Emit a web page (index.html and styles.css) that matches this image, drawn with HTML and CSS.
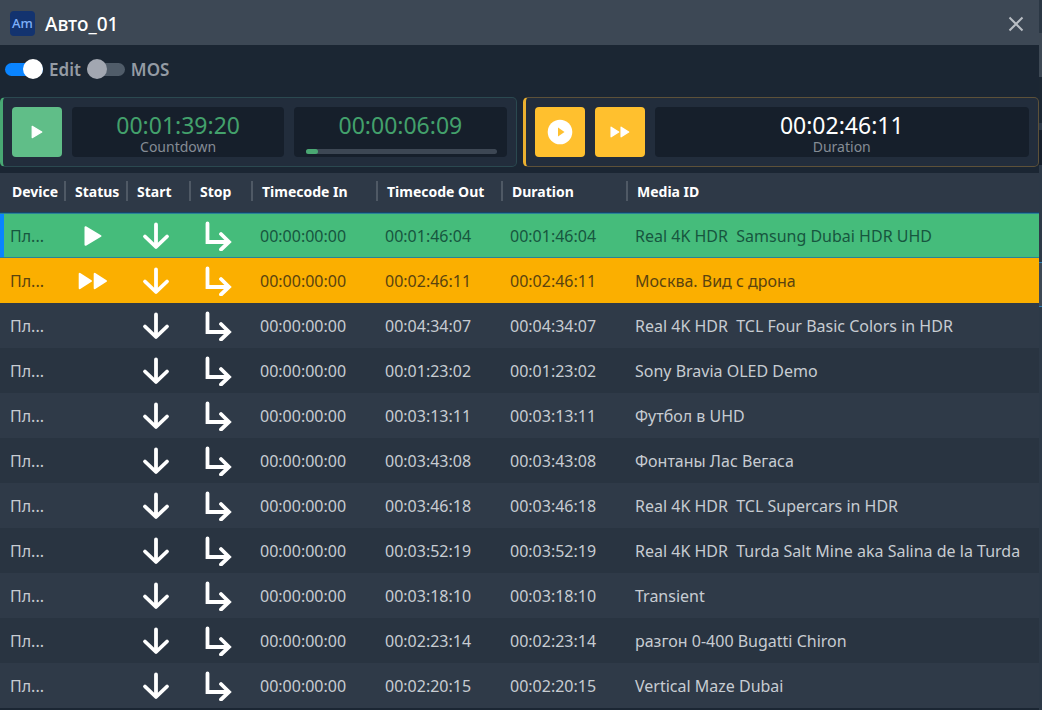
FILE: index.html
```html
<!DOCTYPE html>
<html lang="ru">
<head>
<meta charset="utf-8">
<title>Авто_01</title>
<link rel="stylesheet" href="styles.css">
</head>
<body>
<svg class="defs" aria-hidden="true">
  <symbol id="play" viewBox="0 0 18 22"><path d="M1.5 2.2v17.6L16.5 11z" fill="currentColor" stroke="currentColor" stroke-width="2" stroke-linejoin="round"/></symbol>
  <symbol id="forward" viewBox="0 0 30 18"><path d="M1.7 1.8v14.4L13 9zM16.7 1.8v14.4L28 9z" fill="currentColor" stroke="currentColor" stroke-width="2" stroke-linejoin="round"/></symbol>
  <symbol id="down" viewBox="0 0 28 28"><path d="M14 2.5v22M3 14.5l11 10.500 11-10.500" fill="none" stroke="currentColor" stroke-width="3.8" stroke-linecap="round" stroke-linejoin="round"/></symbol>
  <symbol id="turn" viewBox="0 0 28 30"><path d="M3.500 2.500v18.500h21M17 13l8 8-8 7.500" fill="none" stroke="currentColor" stroke-width="3.800" stroke-linecap="round" stroke-linejoin="miter"/></symbol>
</svg>
<div class="app">
  <main class="window">
    <header class="titlebar">
      <span class="logo">Am</span>
      <h1 class="title">Авто_01</h1>
      <button class="close" aria-label="Close"><svg width="16" height="16" viewBox="0 0 16 16"><path d="M1.500 1.500l13 13M14.500 1.500l-13 13" stroke="currentColor" stroke-width="2"/></svg></button>
    </header>
    <div class="modes">
      <label class="mode"><input class="switch" type="checkbox" checked><span>Edit</span></label>
      <label class="mode"><input class="switch" type="checkbox"><span>MOS</span></label>
    </div>
    <div class="decks">
      <section class="deck deck-air">
        <button class="action" aria-label="Play"><svg width="12" height="14"><use href="#play"/></svg></button>
        <div class="readout"><span class="clock">00:01:39:20</span><span class="caption">Countdown</span></div>
        <div class="readout"><span class="clock">00:00:06:09</span><div class="progress"><div class="progress-fill" style="width: 6%"></div></div></div>
      </section>
      <section class="deck deck-next">
        <button class="action" aria-label="Play next"><svg width="26" height="26" viewBox="0 0 26 26"><circle cx="13" cy="13" r="12.300" fill="currentColor"/><path class="cutout" d="M11 8.500v9l6.500-4.500z"/></svg></button>
        <button class="action" aria-label="Skip"><svg width="20" height="12"><use href="#forward"/></svg></button>
        <div class="readout"><span class="clock">00:02:46:11</span><span class="caption">Duration</span></div>
      </section>
    </div>
    <table class="playlist">
      <colgroup><col class="c-device"><col class="c-status"><col class="c-start"><col class="c-stop"><col class="c-time"><col class="c-time"><col class="c-time"><col></colgroup>
      <thead><tr><th>Device</th><th>Status</th><th>Start</th><th>Stop</th><th>Timecode In</th><th>Timecode Out</th><th>Duration</th><th>Media ID</th></tr></thead>
      <tbody id="rows"></tbody>
    </table>
  </main>
  <aside class="behind"></aside>
</div>
<script src="playlist.js"></script>
</body>
</html>
```

FILE: playlist.js
```js
const items = [
  ["00:01:46:04", "Real 4K HDR  Samsung Dubai HDR UHD", "play"],
  ["00:02:46:11", "Москва. Вид с дрона", "forward"],
  ["00:04:34:07", "Real 4K HDR  TCL Four Basic Colors in HDR"],
  ["00:01:23:02", "Sony Bravia OLED Demo"],
  ["00:03:13:11", "Футбол в UHD"],
  ["00:03:43:08", "Фонтаны Лас Вегаса"],
  ["00:03:46:18", "Real 4K HDR  TCL Supercars in HDR"],
  ["00:03:52:19", "Real 4K HDR  Turda Salt Mine aka Salina de la Turda"],
  ["00:03:18:10", "Transient"],
  ["00:02:23:14", "разгон 0-400 Bugatti Chiron"],
  ["00:02:20:15", "Vertical Maze Dubai"]
];
const icon = name => name ? `<svg class="icon icon-${name}"><use href="#${name}"/></svg>` : "";
document.getElementById("rows").innerHTML = items.map(([time, media, status]) => `
  <tr class="${status ? "is-" + status : ""}">
    <td>Пл...</td>
    <td class="glyph">${icon(status)}</td>
    <td class="glyph">${icon("down")}</td>
    <td class="glyph">${icon("turn")}</td>
    <td>00:00:00:00</td><td>${time}</td><td>${time}</td>
    <td class="media">${media}</td>
  </tr>`).join("");
```

FILE: styles.css
```css
* { box-sizing: border-box; }
body {
  margin: 0;
  background: #1b2532;
  color: #c7ccd2;
  font: 16px/20px "Noto Sans", "Open Sans", sans-serif;
}
.defs { position: absolute; width: 0; height: 0; }
.app { display: flex; min-height: 100vh; }
.window { flex: 1; min-width: 0; background: #1b2633; overflow: hidden; }
.behind {
  width: 3px;
  background: linear-gradient(#2b3744 33px, #3d4854 33px 77px, #1c2733 77px 123px, #2d3947 123px 130px, #161f2b 130px 165px, #2d3947 165px 262px, #2f80b5 262px 263px, #3d4854 263px 306px, #2f80b5 306px 307px, #2d3947 307px);
}
button { border: 0; padding: 0; display: flex; align-items: center; justify-content: center; font: inherit; cursor: pointer; }

.titlebar { display: flex; align-items: center; height: 45px; padding: 0 11px 0 10px; background: #3d4855; gap: 10px; }
.logo { width: 25px; height: 25px; border-radius: 4px; background: #13336f; color: #7fb0fa; font-size: 13px; line-height: 24px; text-align: center; font-weight: 500; margin-top: 2px; }
.title { flex: 1; margin: 2px 0 0; color: #fff; font-size: 19px; font-weight: 500; }
.close { width: 24px; height: 24px; padding-top: 2px; background: none; color: #b9bec4; }

.modes { display: flex; align-items: center; gap: 6px; height: 48px; padding-left: 5px; }
.mode { display: flex; align-items: center; gap: 6px; color: #949ba4; font-size: 17px; font-weight: 600; }
.mode span { padding-top: 2px; }
.switch { appearance: none; position: relative; width: 38px; height: 20px; margin: 0; }
.switch::before { content: ""; position: absolute; inset: 4px 0 3px; border-radius: 7px; background: #505c69; }
.switch::after { content: ""; position: absolute; top: 0; left: 0; width: 20px; height: 20px; border-radius: 50%; background: #a2a7b1; }
.switch:checked::before { background: #0a84ff; }
.switch:checked::after { left: auto; right: 0; background: #fff; }

.decks { display: grid; grid-template-columns: 1fr 1fr; gap: 6px; margin-top: 4px; }
.deck { display: flex; gap: 10px; padding: 9px; border: 1px solid; border-left-width: 3px; border-radius: 5px; background: #222d3c; }
.deck-air { border-color: #2b4950; border-left-color: #48a873; color: #43a16c; }
.deck-next { border-color: #5d5139; border-left-color: #eab030; color: #fff; }
.action { width: 50px; height: 50px; border-radius: 4px; color: #fff; }
.deck-air .action { background: #60be88; }
.deck-next .action { background: #ffc02e; }
.cutout { fill: #ffc02e; }
.readout { flex: 1; display: flex; flex-direction: column; align-items: center; height: 50px; border-radius: 4px; background: #161f2b; }
.clock { margin-top: 6px; font-size: 23px; line-height: 24px; }
.caption { padding-top: 1px; color: #858c95; font-size: 14px; line-height: 18px; }
.progress { align-self: stretch; height: 5px; margin: 12px 10px 0 12px; border-radius: 3px; background: #3d4754; }
.progress-fill { height: 5px; border-radius: 3px; background: #4aa873; }

.playlist { width: 100%; margin-top: 6px; table-layout: fixed; border-collapse: separate; border-spacing: 0; }
.c-device, .c-start { width: 63px; }
.c-status, .c-stop { width: 62px; }
.c-time { width: 125px; }
th {
  height: 40px; padding: 0 0 1px 12px;
  background: #2e3947 linear-gradient(#4f5965, #4f5965) no-repeat 1px 8px / 2px 20px;
  border-bottom: 1px solid #174468;
  color: #fff; font-size: 14px; font-weight: 700; text-align: left; white-space: nowrap;
}
th:first-child { background-image: none; }
td { height: 45px; padding: 0 0 0 10px; white-space: nowrap; }
tbody tr { background: #293441; }
tbody tr:nth-child(odd) { background: #2f3a48; }
td.glyph { padding: 0 2px 0 0; }
td.media { white-space: pre; }
tbody tr.is-play { background: #45bc7b; color: #17563f; }
tbody tr.is-forward { background: #fbaf00; color: #5a430f; }
.is-play td { border: solid #2b8198; border-width: 1px 0; }
.is-play td:first-child { box-shadow: inset 4px 0 #0a84ff; }
.icon { display: block; margin: 0 auto; color: #fff; }
.icon-play { width: 18px; height: 22px; }
.icon-forward { width: 30px; height: 18px; }
.icon-down { width: 28px; height: 28px; }
.icon-turn { width: 28px; height: 30px; }
```
